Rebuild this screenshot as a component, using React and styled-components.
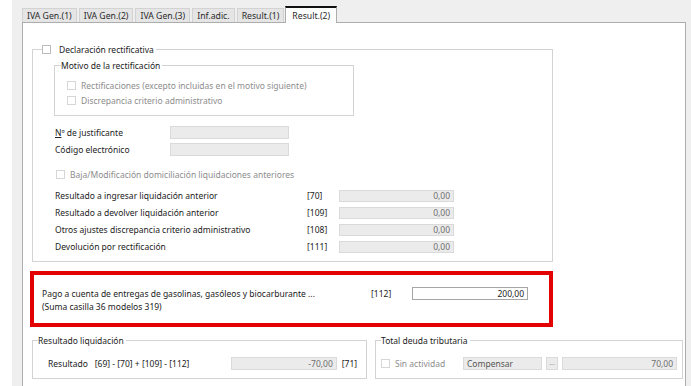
import React from 'react';
import styled, { createGlobalStyle } from 'styled-components';

const GlobalStyle = createGlobalStyle`
  html, body {
    margin: 0;
    padding: 0;
    background: #fff;
  }
  body {
    font-family: "Noto Sans", "DejaVu Sans", sans-serif;
    font-size: 8.5px;
    color: #222;
  }
  * {
    box-sizing: border-box;
  }
`;

const Window = styled.div`
  width: 691px;
  height: 386px;
  overflow: hidden;
  display: flex;
  padding-left: 12px;
  background: #fff;
`;

const Frame = styled.div`
  flex: 1;
  display: flex;
  flex-direction: column;
  background: #efefef;
  padding: 0 5px 0 10px;
`;

const TabStrip = styled.div`
  display: flex;
  align-items: flex-end;
  height: 22px;
  position: relative;
  z-index: 1;
`;

const Tab = styled.div`
  height: ${(p) => (p.$active ? 17 : 14)}px;
  padding: 0 ${(p) => (p.$active ? 6 : 4)}px;
  display: flex;
  align-items: center;
  font-size: 8.7px;
  background: ${(p) => (p.$active ? '#fff' : '#e5e5e5')};
  border: 1px solid ${(p) => (p.$active ? '#adadad' : '#d2d2d2')};
  border-top: ${(p) => (p.$active ? '2px solid #111' : '1px solid #d2d2d2')};
  border-bottom: none;
  margin-bottom: ${(p) => (p.$active ? -1 : 0)}px;
  margin-left: ${(p) => (p.$active ? 1 : 2)}px;
  white-space: nowrap;
  color: #2a2a2a;
  &:first-child {
    margin-left: 0;
  }
`;

const Panel = styled.div`
  flex: 1;
  background: #fff;
  border: 1px solid #adadad;
  border-bottom: none;
  padding: 21px 2px 0 9px;
  display: flex;
  flex-direction: column;
`;

const Group = styled.fieldset`
  margin: 0;
  min-width: 0;
  border: 1px solid #d3d3d3;
  width: ${(p) => p.$w}px;
  padding: ${(p) => p.$pad};
`;

const GroupBody = styled.div`
  display: flex;
  flex-direction: column;
  padding-left: ${(p) => p.$pl || 0}px;
`;

const Legend = styled.legend`
  margin-left: ${(p) => p.$ml || 6}px;
  padding: 0 2px 0 0;
  line-height: 11px;
  display: flex;
  align-items: center;
  gap: 8px;
  color: #222;
`;

const Box = styled.span`
  width: 9px;
  height: 9px;
  flex: none;
  background: #fff;
  border: 1px solid ${(p) => (p.$off ? '#d6d6d6' : '#bcbcbc')};
`;

const CheckRow = styled.div`
  height: ${(p) => p.$h || 15}px;
  width: ${(p) => (p.$w ? `${p.$w}px` : 'auto')};
  display: flex;
  align-items: center;
  gap: ${(p) => p.$gap || 5}px;
  padding-left: ${(p) => p.$indent || 0}px;
  color: ${(p) => (p.$off ? '#8d8d8d' : '#222')};
  white-space: nowrap;
`;

const FieldRow = styled.div`
  height: 17px;
  display: flex;
  align-items: center;
  padding-left: 1px;
  margin-top: ${(p) => p.$mt || 0}px;
  white-space: nowrap;
`;

const Label = styled.span`
  width: ${(p) => p.$w}px;
  flex: none;
`;

const Code = styled.span`
  width: ${(p) => p.$w}px;
  margin-left: ${(p) => p.$ml || 0}px;
  flex: none;
`;

const Field = styled.div`
  width: ${(p) => p.$w}px;
  height: ${(p) => p.$h || 12}px;
  flex: none;
  background: ${(p) => (p.$live ? '#fff' : '#ebebeb')};
  border: 1px solid ${(p) => (p.$live ? '#a6a6a6' : '#dadada')};
  color: ${(p) => (p.$live ? '#222' : p.$left ? '#555' : '#6f6f6f')};
  display: flex;
  align-items: center;
  justify-content: ${(p) => (p.$left ? 'flex-start' : 'flex-end')};
  padding: 0 3px;
  margin-left: ${(p) => p.$ml || 0}px;
`;

const Highlight = styled.div`
  margin: 9px 0 0 -2px;
  width: 523px;
  height: 56px;
  border: 4px solid #e30000;
  padding: 12px 0 0 8px;
  display: flex;
  flex-direction: column;
`;

const Line = styled.div`
  height: 13px;
  display: flex;
  align-items: center;
  white-space: nowrap;
`;

const BottomRow = styled.div`
  display: flex;
  gap: 8px;
  margin-top: 8px;
`;

const Inline = styled.div`
  height: 13px;
  display: flex;
  align-items: center;
  white-space: nowrap;
  padding-left: ${(p) => p.$pl}px;
`;

const Formula = styled.span`
  margin-left: 7px;
  width: 136px;
`;

const Dots = styled.div`
  width: 12px;
  height: 13px;
  margin-left: 4px;
  background: #ebebeb;
  border: 1px solid #dadada;
  color: #999;
  font-size: 7px;
  display: flex;
  align-items: flex-end;
  justify-content: center;
  padding-bottom: 2px;
`;

const tabs = ['IVA Gen.(1)', 'IVA Gen.(2)', 'IVA Gen.(3)', 'Inf.adic.', 'Result.(1)', 'Result.(2)'];

const rows = [
  ['Resultado a ingresar liquidación anterior', '[70]'],
  ['Resultado a devolver liquidación anterior', '[109]'],
  ['Otros ajustes discrepancia criterio administrativo', '[108]'],
  ['Devolución por rectificación', '[111]'],
];

const App = () => {
  return (
    <>
      <GlobalStyle />
      <Window>
        <Frame>
          <TabStrip>
            {tabs.map((t, i) => (
              <Tab key={t} $active={i === tabs.length - 1}>
                {t}
              </Tab>
            ))}
          </TabStrip>
          <Panel>
            <Group $w={521} $pad="5px 0 6px 0">
              <Legend $ml={9}>
                <Box />
                <span>Declaración rectificativa</span>
              </Legend>
              <GroupBody $pl={21}>
                <Group $w={300} $pad="7px 0 7px 0">
                  <Legend $ml={6}>Motivo de la rectificación</Legend>
                  <GroupBody $pl={12}>
                    <CheckRow $off>
                      <Box $off />
                      Rectificaciones (excepto incluidas en el motivo siguiente)
                    </CheckRow>
                    <CheckRow $off>
                      <Box $off />
                      Discrepancia criterio administrativo
                    </CheckRow>
                  </GroupBody>
                </Group>
                <FieldRow $mt={8}>
                  <Label $w={115}>
                    <u>N</u>º de justificante
                  </Label>
                  <Field $w={119} $h={13} />
                </FieldRow>
                <FieldRow>
                  <Label $w={115}>Código electrónico</Label>
                  <Field $w={119} $h={13} />
                </FieldRow>
                <FieldRow $mt={8}>
                  <CheckRow $off $indent={1} $h={17}>
                    <Box $off />
                    Baja/Modificación domiciliación liquidaciones anteriores
                  </CheckRow>
                </FieldRow>
                {rows.map(([label, code], i) => (
                  <FieldRow key={code} $mt={i === 0 ? 4 : 0}>
                    <Label $w={252}>{label}</Label>
                    <Code $w={32}>{code}</Code>
                    <Field $w={115}>0,00</Field>
                  </FieldRow>
                ))}
              </GroupBody>
            </Group>

            <Highlight>
              <Line>
                <Label $w={329}>Pago a cuenta de entregas de gasolinas, gasóleos y biocarburante ...</Label>
                <Code $w={41}>[112]</Code>
                <Field $w={116} $h={13} $live>
                  200,00
                </Field>
              </Line>
              <Line>(Suma casilla 36 modelos 319)</Line>
            </Highlight>

            <BottomRow>
              <Group $w={335} $pad="11px 0 8px 0">
                <Legend $ml={5}>Resultado liquidación</Legend>
                <Inline $pl={15}>
                  <span>Resultado</span>
                  <Formula>[69] - [70] + [109] - [112]</Formula>
                  <Field $w={106} $h={13}>
                    -70,00
                  </Field>
                  <Code $w={20} $ml={5}>
                    [71]
                  </Code>
                </Inline>
              </Group>
              <Group $w={308} $pad="11px 0 8px 0">
                <Legend $ml={5}>Total deuda tributaria</Legend>
                <Inline $pl={5}>
                  <CheckRow $off $h={13} $w={82}>
                    <Box $off />
                    Sin actividad
                  </CheckRow>
                  <Field $w={79} $h={13} $left>
                    Compensar
                  </Field>
                  <Dots>...</Dots>
                  <Field $w={115} $h={13} $ml={4}>
                    70,00
                  </Field>
                </Inline>
              </Group>
            </BottomRow>
          </Panel>
        </Frame>
      </Window>
    </>
  );
};

export default App;
